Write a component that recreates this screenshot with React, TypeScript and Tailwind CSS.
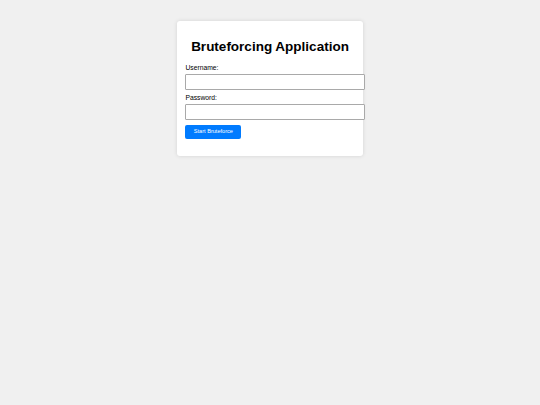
export default function App() {
  return (
    <div className="min-h-screen bg-[#f0f0f0] pt-[21px] font-['Liberation_Sans',Arial,sans-serif]">
      {/* Form card */}
      <div className="mx-auto w-[186px] rounded-[3px] bg-white p-[8.4px] shadow-[0_0_4px_rgba(0,0,0,0.12)]">
        <h1 className="mt-[10px] mb-[9px] text-center text-[13.5px] font-bold leading-[15.5px] text-black">
          Bruteforcing Application
        </h1>
        <form onSubmit={(e) => e.preventDefault()}>
          <label className="mb-[2px] block text-[6.75px] leading-[7.8px] text-black">Username:</label>
          <input
            type="text"
            className="mb-[4px] block h-[16.5px] w-[180px] rounded-[1px] border border-[#a9a9a9] bg-white"
          />
          <label className="mb-[2px] block text-[6.75px] leading-[7.8px] text-black">Password:</label>
          <input
            type="password"
            className="mb-[4.5px] block h-[16.5px] w-[180px] rounded-[1px] border border-[#a9a9a9] bg-white"
          />
          <button
            type="submit"
            className="block h-[14.5px] w-[56px] rounded-[2px] bg-[#007bff] text-[5.6px] leading-none text-white"
          >
            Start Bruteforce
          </button>
        </form>
        <div className="h-[8.4px]" />
      </div>
    </div>
  );
}
